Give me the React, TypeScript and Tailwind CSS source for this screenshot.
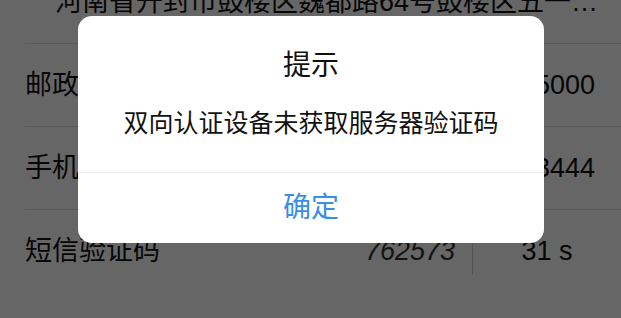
import React from "react";

const font = {
  fontFamily: '"Liberation Sans", "Noto Sans CJK SC", sans-serif',
};

const rows = [
  { label: "邮政编码", value: "475000" },
  { label: "手机号码", value: "13800133444" },
];

export default function App() {
  return (
    <div
      className="relative h-[318px] w-[621px] overflow-hidden bg-white text-[#111]"
      style={font}
    >
      {/* Form behind */}
      <div className="-mt-[39px] flex flex-col">
        <div className="ml-[25px] flex h-[83px] items-center border-b border-[#e0e0e0] pl-[30px] pr-[18px]">
          <span className="truncate text-[27px]">
            河南省开封市鼓楼区魏都路64号鼓楼区五一路一号院
          </span>
        </div>
        {rows.map((r) => (
          <div
            key={r.label}
            className="ml-[25px] flex h-[83px] items-center justify-between border-b border-[#e0e0e0] pr-[26px]"
          >
            <span className="text-[27px]">{r.label}</span>
            <span className="text-[27px]">{r.value}</span>
          </div>
        ))}
        <div className="ml-[25px] flex h-[83px] items-center">
          <span className="text-[27px]">短信验证码</span>
          <span className="flex-1 pr-[17px] text-right text-[27px] italic text-[#333]">
            762573
          </span>
          <div className="h-[46px] w-px bg-[#ccc]" />
          <span className="w-[148px] text-center text-[27px]">31 s</span>
        </div>
      </div>

      {/* Overlay */}
      <div className="absolute inset-0 bg-black/60" />

      {/* Alert */}
      <div className="absolute left-[78px] top-[16px] flex w-[466px] flex-col rounded-[14px] bg-white">
        <div className="flex h-[156px] flex-col items-center pt-[32px]">
          <h2 className="text-[28px] leading-[36px] text-[#111]">提示</h2>
          <p className="mt-[21px] text-[25px] leading-[36px] text-[#111]">
            双向认证设备未获取服务器验证码
          </p>
        </div>
        <div className="h-px bg-[#eee]" />
        <button className="flex h-[70px] items-center justify-center text-[28px] text-[#3a8ee6]">
          确定
        </button>
      </div>
    </div>
  );
}
